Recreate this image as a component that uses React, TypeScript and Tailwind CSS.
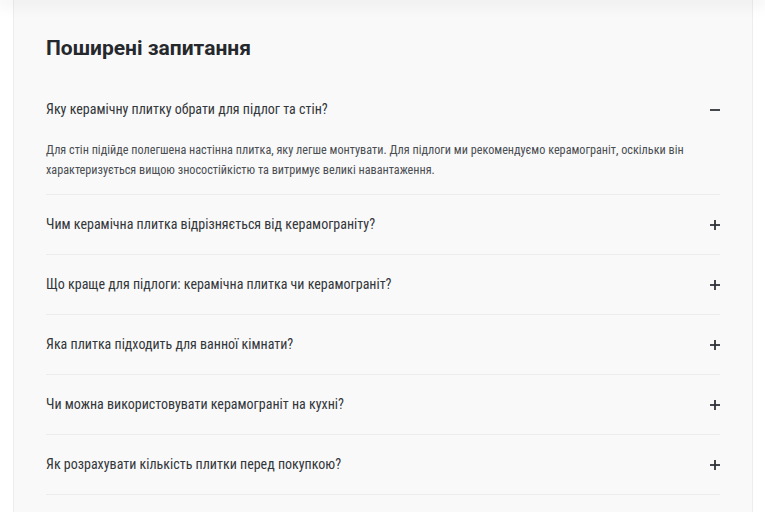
const faqs = [
  {
    q: "Яку керамічну плитку обрати для підлог та стін?",
    a: "Для стін підійде полегшена настінна плитка, яку легше монтувати. Для підлоги ми рекомендуємо керамограніт, оскільки він характеризується вищою зносостійкістю та витримує великі навантаження.",
    open: true,
  },
  { q: "Чим керамічна плитка відрізняється від керамограніту?" },
  { q: "Що краще для підлоги: керамічна плитка чи керамограніт?" },
  { q: "Яка плитка підходить для ванної кімнати?" },
  { q: "Чи можна використовувати керамограніт на кухні?" },
  { q: "Як розрахувати кількість плитки перед покупкою?" },
];

function Toggle({ open }: { open?: boolean }) {
  return (
    <svg viewBox="0 0 10 10" className="w-[10px] h-[10px] text-[#2f3338]" aria-hidden="true">
      <path d="M0 5h10" stroke="currentColor" strokeWidth={1.8} />
      {!open && <path d="M5 0v10" stroke="currentColor" strokeWidth={1.8} />}
    </svg>
  );
}

export default function App() {
  return (
    <div
      className="relative min-h-screen bg-white"
      style={{ fontFamily: "'Roboto Condensed', Roboto, sans-serif" }}
    >
      {/* header shadow */}
      <div className="absolute left-0 right-0 top-0 h-0 shadow-[0_0_16px_4px_rgba(0,0,0,0.08)]" />

      <section className="ml-[13px] w-[740px] min-h-[512px] bg-[#f9f9f9] border-x border-[#ededed] px-8 pt-[34px]">
        <h2
          className="text-[21px] leading-[28px] font-bold text-[#25282c]"
          style={{ fontFamily: "Roboto, sans-serif" }}
        >
          Поширені запитання
        </h2>

        <div className="mt-[18px]">
          {faqs.map((f) => (
            <div key={f.q} className="border-b border-[#ececec]">
              <div className="flex items-center justify-between h-[59px]">
                <span className="text-[14px] text-[#33363a]">{f.q}</span>
                <Toggle open={f.open} />
              </div>
              {f.open && (
                <p className="pt-[1px] pb-[14px] text-[12.2px] leading-[20px] text-[#4a4d52]">
                  {f.a}
                </p>
              )}
            </div>
          ))}
        </div>
      </section>
    </div>
  );
}
